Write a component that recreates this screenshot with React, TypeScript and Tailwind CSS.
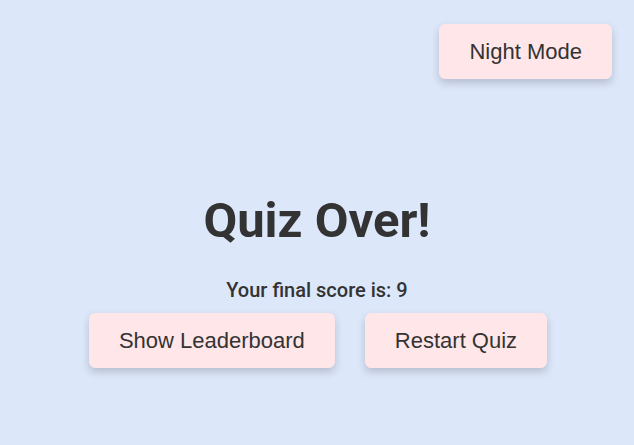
const buttonClass =
  "rounded-md border border-[#ffe6e8] bg-[#ffe6e8] px-[29px] py-[14px] font-['Liberation_Sans',Arial,sans-serif] text-[22px] leading-[25px] text-[#333] shadow-[0_4px_8px_rgba(0,0,0,0.18)]";

export default function App() {
  const score = 9;

  return (
    <div className="min-h-screen bg-[#dce7fa] font-['Roboto',sans-serif] text-[#333]">
      <div className="flex justify-end pr-[22px] pt-6">
        <button className={buttonClass}>Night Mode</button>
      </div>

      <div className="mt-[117px] flex flex-col items-center">
        <h1 className="text-[49px] font-bold leading-none">Quiz Over!</h1>
        <p className="mt-[31px] text-xl font-medium leading-7">Your final score is: {score}</p>
        <div className="mt-[9px] flex gap-[30px] pl-[2px]">
          <button className={buttonClass}>Show Leaderboard</button>
          <button className={buttonClass}>Restart Quiz</button>
        </div>
      </div>
    </div>
  );
}
